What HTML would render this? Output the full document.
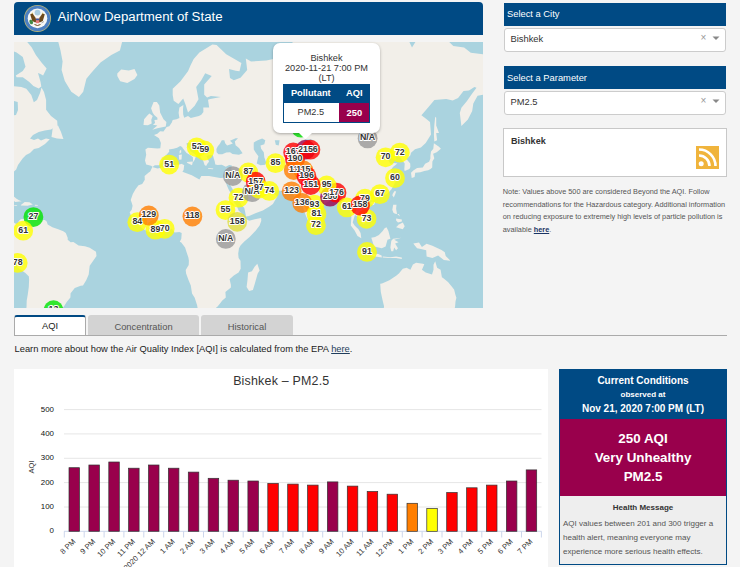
<!DOCTYPE html>
<html><head><meta charset="utf-8">
<style>
*{margin:0;padding:0;box-sizing:border-box}
html,body{width:740px;height:567px;overflow:hidden;background:#f4f4f4;font-family:"Liberation Sans",sans-serif;color:#333}
.a{position:absolute;white-space:nowrap}
.blue{background:#004a84}
.t{position:absolute;white-space:nowrap;line-height:1}
svg text{font-family:"Liberation Sans",sans-serif}
.ml{font-size:8.8px;font-weight:bold;fill:#333;text-anchor:middle;stroke:#fff;stroke-width:2px;paint-order:stroke;stroke-linejoin:round}
.yl{font-size:7.9px;fill:#111;text-anchor:end}
.xl{font-size:7.6px;fill:#333;text-anchor:end}
</style></head><body>
<!-- header -->
<div class="a blue" style="left:14px;top:2px;width:469px;height:32.5px;border-radius:4px 4px 0 0"></div>
<svg class="a" style="left:23px;top:4px" width="29" height="29" viewBox="0 0 29 29">
 <circle cx="14.5" cy="14.4" r="13.5" fill="#b4b27a"/>
 <circle cx="14.5" cy="14.4" r="12.7" fill="#4d80c2"/>
 <circle cx="14.5" cy="14.4" r="9.8" fill="#f7f7f5"/>
 <circle cx="14.5" cy="8.6" r="2.9" fill="#a8cde2"/>
 <path d="M7.2,10.2 L9.6,9.6 L12.2,13.2 L13.8,16.8 L12.4,18.6 L9.2,17 Z" fill="#6d4a1c"/>
 <path d="M21.8,10.2 L19.4,9.6 L16.8,13.2 L15.2,16.8 L16.6,18.6 L19.8,17 Z" fill="#6d4a1c"/>
 <path d="M8.3,9.6 L9.6,8.4 L10.2,10 Z M20.7,9.6 L19.4,8.4 L18.8,10 Z" fill="#c9b04a"/>
 <rect x="12.9" y="14.6" width="3.3" height="4.6" fill="#e57878"/>
 <rect x="12.9" y="14.6" width="3.3" height="1.6" fill="#3a5ca6"/>
 <ellipse cx="8.2" cy="18" rx="1.7" ry="2.4" fill="#3f8a44" transform="rotate(-25 8.2 18)"/>
 <path d="M18.5,19 L21,17.5" stroke="#999" stroke-width="0.8"/>
 <path d="M11.5,20.5 L14.5,21.5 L17.5,20.5" stroke="#6d4a1c" stroke-width="1" fill="none"/>
</svg>
<div class="t" style="left:57.6px;top:10px;font-size:13.25px;color:#fff">AirNow Department of State</div>

<!-- map -->
<svg class="a" style="left:0;top:0" width="740" height="567" viewBox="0 0 740 567">
<defs><clipPath id="mc"><rect x="14" y="42" width="469" height="266"/></clipPath></defs>
<g clip-path="url(#mc)">
<rect x="14" y="42" width="469" height="266" fill="#aad3df"/>
<polygon points="10.0,40.0 27.2,42.0 31.6,47.3 36.0,55.2 41.3,62.3 46.6,68.5 43.1,75.5 40.5,74.0 38.0,73.0 40.5,81.7 41.3,86.5 38.7,88.5 33.4,86.1 29.0,81.7 22.8,77.3 16.6,77.3 15.8,75.5 22.8,71.1 25.5,66.7 22.8,57.0 16.6,52.6 10.0,50.0" fill="#f2efe9"/>
<polygon points="10.0,86.0 21.4,86.9 26.3,88.7 31.3,94.9 33.8,102.3 37.0,100.0 40.0,93.0 41.5,87.5 44.0,92.0 46.1,100.0 46.1,109.7 51.0,116.0 57.2,120.8 57.5,125.5 51.0,129.4 44.7,130.5 38.7,132.0 33.0,135.0 30.0,138.5 34.0,140.0 38.0,138.5 41.0,140.5 46.0,138.5 49.8,139.3 45.0,144.0 38.7,148.0 34.0,149.0 30.0,153.0 26.0,155.0 22.6,158.6 18.0,165.0 16.2,169.5 14.0,171.6 10.0,172.0" fill="#f2efe9"/>
<polygon points="53.0,126.0 58.0,125.5 61.0,132.0 63.4,139.0 57.0,138.5 51.5,137.0" fill="#f2efe9"/>
<polygon points="10.4,195.5 14.2,196.8 16.2,198.6 19.0,200.3 21.7,201.3 15.2,201.9 10.4,198.6" fill="#f2efe9"/>
<polygon points="20.9,204.9 24.7,201.9 29.5,202.3 32.8,204.5 27.6,205.7 20.9,205.5" fill="#f2efe9"/>
<polygon points="13.5,204.9 17.5,205.3 16.2,206.1 13.5,205.3" fill="#f2efe9"/>
<polygon points="34.9,204.7 37.9,204.9 37.7,205.7 34.9,205.7" fill="#f2efe9"/>
<polygon points="-8.7,222.5 14.2,222.7 16.2,224.0 18.1,222.7 19.0,220.7 20.4,219.6 21.5,219.0 23.8,219.0 27.0,216.8 26.1,219.6 26.7,219.9 27.6,218.4 29.5,217.2 30.5,218.6 33.3,219.9 35.2,220.3 41.0,220.3 44.8,220.1 46.7,221.5 47.7,224.4 52.4,227.3 58.2,229.2 63.3,231.3 65.8,233.0 67.7,237.8 67.7,239.7 70.6,242.2 73.4,242.0 78.6,245.5 84.9,246.2 89.7,247.8 96.0,251.8 96.5,256.0 92.5,261.8 89.7,265.7 88.7,274.6 86.2,280.3 83.0,285.6 80.7,285.8 74.8,287.9 70.6,293.2 70.4,297.5 66.7,301.9 63.9,306.4 61.0,309.8 48.6,324.1 20.0,324.1 26.5,307.5 26.7,300.8 27.8,294.3 28.8,287.1 29.1,280.1 28.9,276.6 25.7,273.2 21.9,270.6 17.5,267.3 16.2,263.8 13.1,258.1 -8.7,250.2" fill="#f2efe9"/>
<polygon points="58.3,30.0 58.3,42.0 60.5,50.6 62.6,61.5 61.6,70.1 64.8,80.9 71.3,91.7 78.9,97.1 83.2,91.7 86.4,78.8 91.8,72.3 100.5,62.5 111.3,55.0 119.9,50.6 122.1,42.0 122.1,30.0" fill="#f2efe9"/>
<polygon points="117.3,73.6 121.2,69.4 128.8,70.4 134.5,68.9 137.4,75.0 134.5,79.0 127.3,82.9 120.2,81.2 117.3,75.9" fill="#f2efe9"/>
<polygon points="152.3,129.8 157.4,128.3 165.8,126.5 166.4,121.9 163.5,119.3 160.1,112.4 159.3,105.5 156.9,101.9 153.6,101.9 151.1,108.3 152.7,112.8 154.2,115.1 157.4,117.7 157.4,119.7 154.4,120.0 155.1,123.1 153.0,124.7 157.4,125.6" fill="#f2efe9"/>
<polygon points="151.7,123.4 151.3,119.7 152.7,116.1 149.4,113.4 146.9,116.1 144.1,119.3 143.5,125.0 147.9,125.3" fill="#f2efe9"/>
<polygon points="152.5,166.7 151.1,165.7 146.2,164.6 145.0,160.4 146.2,154.7 145.4,149.6 147.9,147.8 157.4,148.5 160.3,148.3 160.9,142.9 159.0,138.2 154.0,135.1 157.4,133.7 160.1,131.3 163.5,131.6 166.6,127.1 169.3,126.2 171.8,122.5 172.7,120.0 176.5,119.3 179.4,118.0 178.6,112.8 179.4,107.6 183.4,105.1 183.0,109.3 183.2,114.4 184.2,117.7 188.0,116.1 190.8,118.0 198.9,116.1 201.3,114.8 203.4,112.1 203.3,107.6 209.2,107.6 208.0,99.7 210.3,98.9 220.8,97.0 210.9,95.9 207.1,97.4 204.2,94.7 204.2,84.6 211.7,75.9 205.2,73.2 201.3,80.3 196.2,87.1 198.5,99.3 194.7,105.8 188.0,112.4 185.7,105.1 183.2,98.5 178.4,104.0 173.7,100.8 172.7,95.1 172.7,88.8 180.3,81.6 188.0,71.3 190.7,65.0 193.7,58.9 199.4,52.5 212.4,44.5 216.6,45.1 226.2,54.2 241.4,63.0 239.5,71.3 235.7,70.8 229.0,68.9 230.0,78.1 233.8,80.3 240.5,77.7 247.2,69.9 245.8,58.4 251.0,61.5 266.3,60.5 275.8,58.4 289.2,54.7 293.9,37.3 296.8,26.0 300.0,30.0 409.0,30.0 409.4,42.0 412.0,47.4 415.4,42.0 449.2,42.0 453.3,46.1 464.1,47.4 470.8,52.8 483.0,54.2 490.0,54.2 490.0,94.7 483.0,94.7 477.6,95.8 473.3,103.4 472.2,110.9 467.9,119.6 461.4,126.1 459.8,113.1 461.4,107.7 466.8,101.2 472.2,93.6 476.5,87.7 474.4,87.1 469.0,90.4 463.5,90.9 458.1,97.9 452.7,100.6 446.2,99.0 434.4,100.1 427.9,107.7 421.4,115.2 425.7,118.5 430.0,122.0 431.0,134.5 425.7,142.9 420.9,147.5 415.0,149.3 411.0,152.7 410.4,155.2 406.4,159.0 410.2,163.4 410.4,166.9 409.4,169.0 404.7,170.9 404.3,169.3 404.7,163.4 401.8,159.7 400.5,157.5 396.1,156.0 395.3,160.0 391.3,157.5 388.1,159.7 390.4,164.1 394.2,163.1 397.4,163.6 393.0,166.9 390.9,170.0 395.9,178.4 395.9,180.8 393.8,185.0 391.5,189.3 388.4,192.4 386.0,194.7 381.2,197.0 375.1,198.6 373.2,201.1 369.4,198.6 366.9,200.1 365.1,204.3 369.7,209.7 371.6,217.2 371.3,218.6 367.6,220.9 363.2,224.2 360.8,220.5 358.8,217.2 355.0,214.9 354.1,217.6 352.7,222.5 354.6,225.4 356.6,227.5 358.3,229.0 360.6,233.0 361.3,238.2 357.5,235.9 354.6,230.4 350.8,225.4 351.4,216.8 350.6,213.7 349.5,208.7 346.4,209.1 343.2,209.7 343.6,203.7 339.8,200.7 338.4,197.0 335.9,197.6 332.1,198.2 328.3,201.7 324.5,203.7 322.2,206.3 317.8,210.7 316.5,215.5 315.5,220.9 311.1,225.2 308.6,221.5 306.0,215.9 304.1,210.7 302.1,203.7 301.8,199.1 296.8,199.7 293.9,195.5 292.0,193.5 291.1,191.8 285.3,190.7 278.9,190.7 272.6,189.7 270.6,186.9 266.3,187.8 261.5,185.2 260.1,183.0 257.7,180.6 255.4,180.6 254.8,182.1 257.7,187.1 259.2,189.3 261.5,188.8 261.5,192.2 267.2,192.8 268.7,190.7 270.6,188.6 271.0,192.4 275.0,194.3 277.3,196.6 274.8,200.7 272.9,204.1 269.1,206.7 262.8,210.5 256.7,212.7 249.1,216.0 246.0,216.4 245.3,212.7 244.3,207.9 241.4,204.7 238.0,198.6 234.4,192.4 230.9,186.0 229.4,183.9 230.0,181.9 228.6,185.4 225.4,181.0 227.1,186.0 229.0,190.3 233.4,197.6 234.2,202.5 236.7,205.7 238.6,210.5 242.4,214.1 245.4,218.4 249.1,220.7 254.8,219.2 261.1,218.0 261.3,220.7 259.6,225.4 255.8,230.6 249.6,236.9 244.3,241.5 240.5,245.5 239.0,248.3 238.2,253.7 238.6,257.9 240.5,260.8 240.7,268.7 238.6,272.6 233.8,275.4 229.6,279.3 230.9,284.8 230.9,287.5 225.4,292.1 225.8,297.5 222.3,300.6 220.4,303.0 217.6,306.4 214.7,308.9 212.0,309.8 205.2,310.2 198.5,310.5 197.5,307.5 197.1,305.2 194.7,297.7 192.0,293.4 190.8,285.6 188.4,279.7 186.1,273.6 185.7,270.1 188.7,264.9 188.9,260.8 188.4,257.6 186.6,252.2 185.1,247.4 181.3,242.6 179.8,241.8 181.3,238.8 181.7,233.0 179.4,231.9 174.6,232.5 171.8,228.8 169.7,228.4 165.1,229.2 162.8,230.2 159.3,231.5 155.5,230.6 148.8,232.3 142.5,228.6 138.0,224.4 137.0,222.5 134.5,219.8 131.7,217.6 129.7,212.3 131.7,209.7 132.6,205.7 131.7,202.7 130.7,200.1 132.8,194.1 135.5,189.3 138.5,185.2 142.2,184.1 144.8,179.7 144.6,176.1 148.7,172.5 150.2,171.6 152.1,167.4" fill="#f2efe9"/>
<polygon points="10.0,100.0 17.7,102.0 18.0,110.0 16.0,115.0 10.0,116.0" fill="#aad3df"/>
<polygon points="152.5,166.9 154.8,165.3 159.3,165.3 161.3,163.1 162.6,158.5 167.4,153.7 169.3,151.4 168.9,149.6 173.5,148.8 177.1,147.8 180.2,145.9 182.1,147.0 182.8,148.3 186.6,152.9 190.5,155.2 192.9,157.2 193.1,162.2 194.7,159.7 196.0,156.0 198.5,157.0 195.4,154.5 190.3,150.9 188.9,148.0 187.2,147.0 186.6,143.2 189.3,142.7 190.8,143.7 194.5,148.3 197.7,150.6 200.2,153.5 200.4,157.2 203.3,160.9 204.6,165.0 206.1,166.0 207.5,163.4 208.4,162.4 209.0,161.4 206.7,156.7 206.9,155.7 209.0,155.2 212.8,155.0 213.4,157.0 213.8,158.5 214.7,161.2 215.3,164.6 217.6,165.0 221.8,164.8 225.8,166.7 229.2,165.0 231.9,165.5 231.5,168.1 230.9,171.8 230.0,174.3 228.6,177.5 224.8,177.7 220.2,177.9 209.0,176.1 201.3,175.9 199.4,179.5 191.8,175.2 188.4,174.1 182.4,171.8 183.6,170.0 184.2,165.0 182.6,164.6 182.1,163.8 178.1,164.8 168.9,165.0 162.0,167.6 157.6,168.6 153.0,167.2" fill="#aad3df"/>
<polygon points="218.5,154.2 216.6,152.2 216.4,149.1 217.8,146.2 219.9,143.7 221.8,140.2 224.3,140.2 225.2,143.2 227.1,145.6 230.9,144.3 232.8,143.5 230.0,140.7 235.7,138.2 238.0,138.2 234.8,141.6 235.7,145.4 235.3,145.1 239.0,148.0 242.6,153.2 239.0,154.7 232.5,154.0 230.0,152.2 226.2,152.4 222.3,154.2" fill="#aad3df"/>
<polygon points="253.8,142.4 257.7,140.2 262.2,138.5 265.3,140.2 264.3,144.3 260.5,145.6 261.1,148.8 263.8,152.2 264.3,157.2 266.1,162.2 265.3,164.8 260.5,165.3 256.7,163.4 258.4,156.2 255.8,152.7 253.8,149.6 253.7,145.6" fill="#aad3df"/>
<polygon points="274.8,140.2 279.6,140.2 278.7,145.6 275.8,144.8" fill="#aad3df"/>
<polygon points="304.4,139.6 311.1,139.3 314.0,140.7 306.3,142.1" fill="#aad3df"/>
<polygon points="361.3,125.3 366.5,122.5 372.2,112.1 370.3,114.4 364.6,123.1" fill="#aad3df"/>
<polygon points="186.8,161.9 192.9,161.4 192.0,165.3 187.4,163.1" fill="#f2efe9"/>
<polygon points="179.2,159.7 181.5,159.5 181.9,154.5 178.8,155.0" fill="#f2efe9"/>
<polygon points="179.6,153.7 181.3,152.2 181.1,149.6 179.6,151.1" fill="#f2efe9"/>
<polygon points="208.0,167.9 213.4,168.6 212.8,169.3 208.2,168.8" fill="#f2efe9"/>
<polygon points="224.8,169.7 229.2,167.6 226.2,168.6" fill="#f2efe9"/>
<polygon points="315.7,221.9 316.5,221.9 319.5,226.3 318.4,228.8 316.1,229.2 315.5,226.3" fill="#f2efe9"/>
<polygon points="257.3,263.8 259.6,270.6 257.7,273.6 254.8,283.8 252.9,290.0 249.1,291.1 246.6,286.9 247.5,279.7 248.1,272.6 251.9,271.2 254.6,266.7" fill="#f2efe9"/>
<polygon points="411.7,177.9 414.6,177.0 415.2,172.7 420.3,172.3 424.3,171.1 428.2,170.2 430.6,169.0 432.2,167.4 432.4,161.4 434.3,158.2 433.1,153.7 436.7,152.2 440.9,148.8 439.0,146.7 433.9,143.2 433.3,148.8 431.0,151.4 430.4,156.0 430.4,158.5 429.1,161.7 425.1,163.8 422.8,167.4 417.1,167.9 413.3,170.4 411.0,172.7" fill="#f2efe9"/>
<polygon points="434.3,141.6 437.1,140.2 436.2,133.1 439.0,133.1 436.2,125.6 436.2,117.7 435.2,116.7 434.3,125.6 433.9,134.5" fill="#f2efe9"/>
<polygon points="392.5,195.5 393.8,197.6 395.1,194.5 396.1,191.4 394.6,190.9 392.6,193.9" fill="#f2efe9"/>
<polygon points="370.5,203.3 372.2,205.3 374.1,204.7 375.1,202.3 373.7,201.5 371.3,201.9" fill="#f2efe9"/>
<polygon points="392.3,209.7 393.2,204.7 396.5,204.7 396.1,208.7 397.0,213.7 399.9,216.6 398.9,214.1 395.1,213.7 393.4,212.7" fill="#f2efe9"/>
<polygon points="396.1,227.3 402.8,229.2 404.7,226.3 402.8,222.5 398.9,224.4" fill="#f2efe9"/>
<polygon points="396.1,218.6 401.8,219.6 401.8,221.5 398.0,222.5 396.1,220.5" fill="#f2efe9"/>
<polygon points="371.3,237.8 374.1,246.4 381.8,248.3 385.6,246.4 387.5,239.7 390.4,238.8 388.4,231.1 386.5,227.3 384.6,228.3 382.7,231.1 378.9,235.0 375.1,236.9" fill="#f2efe9"/>
<polygon points="391.3,251.2 390.4,247.4 391.3,240.7 393.2,238.8 401.4,237.8 394.2,239.7 398.6,242.2 395.1,243.6 398.0,248.3 396.1,250.2 394.2,247.4 393.2,251.2" fill="#f2efe9"/>
<polygon points="364.6,253.7 369.4,255.6 375.1,256.4 381.8,257.4 381.6,255.4 378.3,253.9 374.1,253.7 370.3,253.1 365.5,252.0" fill="#f2efe9"/>
<polygon points="382.7,256.4 390.4,257.2 396.1,256.6 401.8,257.6 401.8,258.9 396.1,257.9 390.4,257.9 382.7,257.6" fill="#f2efe9"/>
<polygon points="413.3,243.4 419.0,242.4 421.9,247.0 426.6,243.7 432.4,245.7 441.5,249.9 444.8,252.2 445.7,256.0 450.5,260.8 443.8,259.9 438.1,255.6 432.4,257.9 426.6,256.4 426.2,250.2 420.9,248.9 417.1,248.3 415.2,246.0" fill="#f2efe9"/>
<polygon points="380.2,283.8 382.0,283.4 389.4,280.3 396.5,275.6 398.9,273.6 402.8,268.7 406.6,267.7 410.4,269.7 412.9,264.6 416.1,262.8 422.8,263.8 424.3,264.2 422.4,268.7 421.9,269.7 425.7,272.6 432.0,274.6 433.5,269.7 433.5,264.7 435.2,261.2 437.1,267.7 440.6,269.7 441.9,277.2 443.4,278.3 448.0,281.9 451.1,285.8 454.1,289.6 455.5,295.1 456.4,297.7 455.5,301.4 455.1,306.4 451.4,324.1 380.8,324.1 384.1,306.4 382.7,300.8 380.8,292.1" fill="#f2efe9"/>
<circle cx="33.4" cy="217.1" r="9.9" fill="#00e400" fill-opacity="0.8"/>
<circle cx="23.2" cy="230.7" r="9.9" fill="#ffff00" fill-opacity="0.8"/>
<circle cx="17.7" cy="262.9" r="9.9" fill="#ffff00" fill-opacity="0.8"/>
<circle cx="53.5" cy="310.2" r="9.9" fill="#00e400" fill-opacity="0.8"/>
<circle cx="169.2" cy="164.6" r="9.9" fill="#ffff00" fill-opacity="0.8"/>
<circle cx="196.7" cy="147.3" r="9.9" fill="#ffff00" fill-opacity="0.8"/>
<circle cx="204.3" cy="150.5" r="9.9" fill="#ffff00" fill-opacity="0.8"/>
<circle cx="137.3" cy="222.2" r="9.9" fill="#ffff00" fill-opacity="0.8"/>
<circle cx="155.4" cy="229.7" r="9.9" fill="#ffff00" fill-opacity="0.8"/>
<circle cx="164.7" cy="228.8" r="9.9" fill="#ffff00" fill-opacity="0.8"/>
<circle cx="148.8" cy="215.5" r="9.9" fill="#ff7e00" fill-opacity="0.8"/>
<circle cx="192.4" cy="216.5" r="9.9" fill="#ff7e00" fill-opacity="0.8"/>
<circle cx="225.8" cy="238.9" r="9.9" fill="#999999" fill-opacity="0.8"/>
<circle cx="232.9" cy="176.1" r="9.9" fill="#999999" fill-opacity="0.8"/>
<circle cx="248.3" cy="172.4" r="9.9" fill="#ffff00" fill-opacity="0.8"/>
<circle cx="238.5" cy="197.7" r="9.9" fill="#ffff00" fill-opacity="0.8"/>
<circle cx="252" cy="192.2" r="9.9" fill="#999999" fill-opacity="0.8"/>
<circle cx="255.7" cy="181.7" r="9.9" fill="#ff0000" fill-opacity="0.8"/>
<circle cx="258.8" cy="188.5" r="9.9" fill="#ffff00" fill-opacity="0.8"/>
<circle cx="269.3" cy="190.9" r="9.9" fill="#ffff00" fill-opacity="0.8"/>
<circle cx="225.5" cy="210.1" r="9.9" fill="#ffff00" fill-opacity="0.8"/>
<circle cx="237.2" cy="221.8" r="9.9" fill="#dede3a" fill-opacity="0.8"/>
<circle cx="275.5" cy="163.2" r="9.9" fill="#ffff00" fill-opacity="0.8"/>
<circle cx="301" cy="127.7" r="9.9" fill="#00e400" fill-opacity="0.8"/>
<circle cx="305.5" cy="149.7" r="9.9" fill="#99004c" fill-opacity="0.8"/>
<circle cx="293.2" cy="152.5" r="9.9" fill="#ff0000" fill-opacity="0.8"/>
<circle cx="295" cy="159.5" r="9.9" fill="#ff0000" fill-opacity="0.8"/>
<circle cx="310.4" cy="149.7" r="9.9" fill="#ff0000" fill-opacity="0.8"/>
<circle cx="291.6" cy="191.3" r="9.9" fill="#ff7e00" fill-opacity="0.8"/>
<circle cx="314.4" cy="204.6" r="9.9" fill="#ffff00" fill-opacity="0.8"/>
<circle cx="302.2" cy="203.0" r="9.9" fill="#ff7e00" fill-opacity="0.8"/>
<circle cx="316.5" cy="214.1" r="9.9" fill="#ffff00" fill-opacity="0.8"/>
<circle cx="316" cy="225.2" r="9.9" fill="#ffff00" fill-opacity="0.8"/>
<circle cx="293.7" cy="170.1" r="9.9" fill="#ff7e00" fill-opacity="0.8"/>
<circle cx="303.4" cy="170.5" r="9.9" fill="#ff7e00" fill-opacity="0.8"/>
<circle cx="306.5" cy="176.3" r="9.9" fill="#ff0000" fill-opacity="0.8"/>
<circle cx="330" cy="196.7" r="9.9" fill="#99004c" fill-opacity="0.8"/>
<circle cx="336.5" cy="192.7" r="9.9" fill="#ff0000" fill-opacity="0.8"/>
<circle cx="326.6" cy="185.5" r="9.9" fill="#ffff00" fill-opacity="0.8"/>
<circle cx="310.7" cy="185.0" r="9.9" fill="#ff0000" fill-opacity="0.8"/>
<circle cx="346.8" cy="207.4" r="9.9" fill="#ffff00" fill-opacity="0.8"/>
<circle cx="365" cy="198.7" r="9.9" fill="#ffff00" fill-opacity="0.8"/>
<circle cx="379.9" cy="194.2" r="9.9" fill="#ffff00" fill-opacity="0.8"/>
<circle cx="366.6" cy="218.8" r="9.9" fill="#ffff00" fill-opacity="0.8"/>
<circle cx="360" cy="205.5" r="9.9" fill="#ff0000" fill-opacity="0.8"/>
<circle cx="367" cy="251.9" r="9.9" fill="#ffff00" fill-opacity="0.8"/>
<circle cx="395" cy="178.1" r="9.9" fill="#ffff00" fill-opacity="0.8"/>
<circle cx="385.6" cy="157.3" r="9.9" fill="#ffff00" fill-opacity="0.8"/>
<circle cx="399.8" cy="152.6" r="9.9" fill="#ffff00" fill-opacity="0.8"/>
<circle cx="367.6" cy="138.4" r="9.9" fill="#999999" fill-opacity="0.8"/>
<text x="367.6" y="140.3" class="ml">N/A</text>
<text x="196.7" y="149.2" class="ml">52</text>
<text x="204.3" y="152.4" class="ml">59</text>
<text x="293.2" y="154.4" class="ml">167</text>
<text x="399.8" y="154.5" class="ml">72</text>
<text x="305.5" y="151.6" class="ml">250</text>
<text x="310.4" y="151.6" class="ml">156</text>
<text x="385.6" y="159.2" class="ml">70</text>
<text x="295" y="161.4" class="ml">190</text>
<text x="275.5" y="165.1" class="ml">85</text>
<text x="169.2" y="166.5" class="ml">51</text>
<text x="293.7" y="172.0" class="ml">11</text>
<text x="303.4" y="172.4" class="ml">115</text>
<text x="248.3" y="174.3" class="ml">87</text>
<text x="232.9" y="178.0" class="ml">N/A</text>
<text x="306.5" y="178.2" class="ml">196</text>
<text x="395" y="180.0" class="ml">60</text>
<text x="255.7" y="183.6" class="ml">157</text>
<text x="310.7" y="186.9" class="ml">151</text>
<text x="326.6" y="187.4" class="ml">95</text>
<text x="269.3" y="192.8" class="ml">74</text>
<text x="291.6" y="193.2" class="ml">123</text>
<text x="252" y="194.1" class="ml">N/A</text>
<text x="258.8" y="190.4" class="ml">97</text>
<text x="379.9" y="196.1" class="ml">67</text>
<text x="330" y="198.6" class="ml">250</text>
<text x="238.5" y="199.6" class="ml">72</text>
<text x="365" y="200.6" class="ml">79</text>
<text x="336.5" y="194.6" class="ml">176</text>
<text x="302.2" y="204.9" class="ml">136</text>
<text x="314.4" y="206.5" class="ml">93</text>
<text x="360" y="207.4" class="ml">158</text>
<text x="346.8" y="209.3" class="ml">61</text>
<text x="225.5" y="212.0" class="ml">55</text>
<text x="316.5" y="216.0" class="ml">81</text>
<text x="148.8" y="217.4" class="ml">129</text>
<text x="192.4" y="218.4" class="ml">118</text>
<text x="33.4" y="219.0" class="ml">27</text>
<text x="366.6" y="220.7" class="ml">73</text>
<text x="237.2" y="223.7" class="ml">158</text>
<text x="137.3" y="224.1" class="ml">84</text>
<text x="316" y="227.1" class="ml">72</text>
<text x="164.7" y="230.7" class="ml">70</text>
<text x="155.4" y="231.6" class="ml">89</text>
<text x="23.2" y="232.6" class="ml">61</text>
<text x="225.8" y="240.8" class="ml">N/A</text>
<text x="367" y="253.8" class="ml">91</text>
<text x="17.7" y="264.8" class="ml">78</text>
<text x="53.5" y="312.1" class="ml">13</text>
</g>
</svg>

<!-- popup -->
<div class="a" style="left:272.8px;top:43.3px;width:107.4px;height:89.9px;background:#fff;border-radius:7px;box-shadow:0 1px 3px rgba(0,0,0,0.3)"></div>
<svg class="a" style="left:298px;top:132px" width="16" height="9"><path d="M1,1 L7.3,7.3 L14,1 Z" fill="#fff"/></svg>
<div class="t" style="left:272.8px;width:107.4px;text-align:center;top:54.4px;font-size:9.2px;color:#333;line-height:9.7px;white-space:normal">Bishkek<br>2020-11-21 7:00 PM<br>(LT)</div>
<div class="a" style="left:283.1px;top:84px;width:87.1px;height:38.7px;border:1px solid #004a84;background:#fff"></div>
<div class="a blue" style="left:283.1px;top:84px;width:87.1px;height:18.6px"></div>
<div class="a" style="left:338.5px;top:102.6px;width:31.7px;height:20.1px;background:#99004c;border-right:1px solid #004a84;border-bottom:1px solid #004a84"></div>
<div class="t" style="left:283.1px;width:55.4px;text-align:center;top:89.3px;font-size:9.3px;font-weight:bold;color:#fff">Pollutant</div>
<div class="t" style="left:338.5px;width:31.7px;text-align:center;top:89.3px;font-size:9.3px;font-weight:bold;color:#fff">AQI</div>
<div class="t" style="left:283.1px;width:55.4px;text-align:center;top:108.3px;font-size:9.2px;color:#333">PM2.5</div>
<div class="t" style="left:338.5px;width:31.7px;text-align:center;top:107.6px;font-size:9.4px;font-weight:bold;color:#fff">250</div>

<!-- right panel -->
<div class="a blue" style="left:503.5px;top:3px;width:222.7px;height:23px"></div>
<div class="t" style="left:507px;top:10.4px;font-size:9.35px;color:#fff">Select a City</div>
<div class="a" style="left:503.8px;top:27.8px;width:222.4px;height:23.8px;background:#fff;border:1px solid #ccc;border-radius:3px"></div>
<div class="t" style="left:510.5px;top:34.8px;font-size:9.35px;color:#333">Bishkek</div>
<div class="t" style="left:700.5px;top:33px;font-size:10px;color:#999">&#215;</div>
<svg class="a" style="left:712px;top:36px" width="8" height="5"><path d="M0.5,0.5 L7.5,0.5 L4,4 Z" fill="#888"/></svg>

<div class="a blue" style="left:503.5px;top:66px;width:222.7px;height:23px"></div>
<div class="t" style="left:507px;top:74.2px;font-size:9.35px;color:#fff">Select a Parameter</div>
<div class="a" style="left:503.8px;top:90.8px;width:222.4px;height:23.8px;background:#fff;border:1px solid #ccc;border-radius:3px"></div>
<div class="t" style="left:510.5px;top:98.2px;font-size:9.35px;color:#333">PM2.5</div>
<div class="t" style="left:700.5px;top:96px;font-size:10px;color:#999">&#215;</div>
<svg class="a" style="left:712px;top:99px" width="8" height="5"><path d="M0.5,0.5 L7.5,0.5 L4,4 Z" fill="#888"/></svg>

<div class="a" style="left:503px;top:128px;width:223.5px;height:48.5px;background:#fff;border:1px solid #c8c8c8"></div>
<div class="t" style="left:511px;top:137px;font-size:9.05px;font-weight:bold;color:#333">Bishkek</div>
<svg class="a" style="left:696px;top:146px" width="23" height="23" viewBox="0 0 23 23">
 <rect width="23" height="23" fill="#f0b43c"/>
 <circle cx="5.2" cy="17.7" r="2.5" fill="#fff"/>
 <path d="M3,9.5 A10.5,10.5 0 0 1 13.5,20" stroke="#fff" stroke-width="2.6" fill="none"/>
 <path d="M3,3.5 A16.5,16.5 0 0 1 19.5,20" stroke="#fff" stroke-width="2.6" fill="none"/>
</svg>
<div class="t" style="left:502.8px;top:185.8px;font-size:7.33px;color:#555;line-height:12.8px">Note: Values above 500 are considered Beyond the AQI. Follow<br>recommendations for the Hazardous category. Additional information<br>on reducing exposure to extremely high levels of particle pollution is<br>available <span style="color:#1a3565;text-decoration:underline;font-weight:bold">here</span>.</div>

<!-- tabs -->
<div class="a" style="left:14px;top:315px;width:72px;height:21px;background:#fff;border:1px solid #aaa;border-top:2px solid #004a84;border-bottom:none;border-radius:3px 3px 0 0"></div>
<div class="a" style="left:88px;top:315px;width:111px;height:20.5px;background:#d3d3d3;border-radius:3px 3px 0 0"></div>
<div class="a" style="left:201px;top:315px;width:92px;height:20.5px;background:#d3d3d3;border-radius:3px 3px 0 0"></div>
<div class="a" style="left:14px;top:335px;width:713px;height:1px;background:#aaa"></div>
<div class="t" style="left:14px;width:72px;text-align:center;top:322.4px;font-size:9.35px;color:#222">AQI</div>
<div class="t" style="left:88px;width:111px;text-align:center;top:322.6px;font-size:9.35px;color:#555">Concentration</div>
<div class="t" style="left:201px;width:92px;text-align:center;top:322.6px;font-size:9.35px;color:#555">Historical</div>
<div class="t" style="left:14.5px;top:345px;font-size:9.33px;color:#222">Learn more about how the Air Quality Index [AQI] is calculated from the EPA <span style="color:#1f3d5c;text-decoration:underline">here</span>.</div>

<!-- chart -->
<div class="a" style="left:14px;top:369px;width:534px;height:198px;background:#fff"></div>
<svg class="a" style="left:0;top:0" width="740" height="567" viewBox="0 0 740 567">
<text x="281.3" y="385.1" style="font-size:12.45px;fill:#333;text-anchor:middle;letter-spacing:0.2px">Bishkek – PM2.5</text>
<text transform="translate(33.5,467) rotate(-90)" style="font-size:7.6px;fill:#333;text-anchor:middle">AQI</text>
<line x1="64" x2="541.5" y1="507.0" y2="507.0" stroke="#e6e6e6" stroke-width="1"/>
<line x1="64" x2="541.5" y1="482.6" y2="482.6" stroke="#e6e6e6" stroke-width="1"/>
<line x1="64" x2="541.5" y1="458.3" y2="458.3" stroke="#e6e6e6" stroke-width="1"/>
<line x1="64" x2="541.5" y1="433.9" y2="433.9" stroke="#e6e6e6" stroke-width="1"/>
<line x1="64" x2="541.5" y1="409.6" y2="409.6" stroke="#e6e6e6" stroke-width="1"/>
<text x="54" y="533.3" class="yl">0</text>
<text x="54" y="509.0" class="yl">100</text>
<text x="54" y="484.6" class="yl">200</text>
<text x="54" y="460.3" class="yl">300</text>
<text x="54" y="435.9" class="yl">400</text>
<text x="54" y="411.6" class="yl">500</text>
<line x1="64" x2="541.5" y1="531.3" y2="531.3" stroke="#ccd6eb" stroke-width="1"/>
<line x1="64.3" x2="64.3" y1="531.3" y2="537.5" stroke="#ccd6eb" stroke-width="1"/>
<line x1="84.2" x2="84.2" y1="531.3" y2="537.5" stroke="#ccd6eb" stroke-width="1"/>
<line x1="104.1" x2="104.1" y1="531.3" y2="537.5" stroke="#ccd6eb" stroke-width="1"/>
<line x1="123.9" x2="123.9" y1="531.3" y2="537.5" stroke="#ccd6eb" stroke-width="1"/>
<line x1="143.8" x2="143.8" y1="531.3" y2="537.5" stroke="#ccd6eb" stroke-width="1"/>
<line x1="163.7" x2="163.7" y1="531.3" y2="537.5" stroke="#ccd6eb" stroke-width="1"/>
<line x1="183.6" x2="183.6" y1="531.3" y2="537.5" stroke="#ccd6eb" stroke-width="1"/>
<line x1="203.5" x2="203.5" y1="531.3" y2="537.5" stroke="#ccd6eb" stroke-width="1"/>
<line x1="223.3" x2="223.3" y1="531.3" y2="537.5" stroke="#ccd6eb" stroke-width="1"/>
<line x1="243.2" x2="243.2" y1="531.3" y2="537.5" stroke="#ccd6eb" stroke-width="1"/>
<line x1="263.1" x2="263.1" y1="531.3" y2="537.5" stroke="#ccd6eb" stroke-width="1"/>
<line x1="283.0" x2="283.0" y1="531.3" y2="537.5" stroke="#ccd6eb" stroke-width="1"/>
<line x1="302.9" x2="302.9" y1="531.3" y2="537.5" stroke="#ccd6eb" stroke-width="1"/>
<line x1="322.7" x2="322.7" y1="531.3" y2="537.5" stroke="#ccd6eb" stroke-width="1"/>
<line x1="342.6" x2="342.6" y1="531.3" y2="537.5" stroke="#ccd6eb" stroke-width="1"/>
<line x1="362.5" x2="362.5" y1="531.3" y2="537.5" stroke="#ccd6eb" stroke-width="1"/>
<line x1="382.4" x2="382.4" y1="531.3" y2="537.5" stroke="#ccd6eb" stroke-width="1"/>
<line x1="402.3" x2="402.3" y1="531.3" y2="537.5" stroke="#ccd6eb" stroke-width="1"/>
<line x1="422.1" x2="422.1" y1="531.3" y2="537.5" stroke="#ccd6eb" stroke-width="1"/>
<line x1="442.0" x2="442.0" y1="531.3" y2="537.5" stroke="#ccd6eb" stroke-width="1"/>
<line x1="461.9" x2="461.9" y1="531.3" y2="537.5" stroke="#ccd6eb" stroke-width="1"/>
<line x1="481.8" x2="481.8" y1="531.3" y2="537.5" stroke="#ccd6eb" stroke-width="1"/>
<line x1="501.7" x2="501.7" y1="531.3" y2="537.5" stroke="#ccd6eb" stroke-width="1"/>
<line x1="521.5" x2="521.5" y1="531.3" y2="537.5" stroke="#ccd6eb" stroke-width="1"/>
<line x1="541.4" x2="541.4" y1="531.3" y2="537.5" stroke="#ccd6eb" stroke-width="1"/>
<rect x="69.0" y="467.7" width="10.5" height="63.6" fill="#99004c" stroke="#333" stroke-width="0.7"/>
<rect x="88.9" y="465.0" width="10.5" height="66.3" fill="#99004c" stroke="#333" stroke-width="0.7"/>
<rect x="108.8" y="462.0" width="10.5" height="69.3" fill="#99004c" stroke="#333" stroke-width="0.7"/>
<rect x="128.6" y="468.2" width="10.5" height="63.1" fill="#99004c" stroke="#333" stroke-width="0.7"/>
<rect x="148.5" y="465.0" width="10.5" height="66.3" fill="#99004c" stroke="#333" stroke-width="0.7"/>
<rect x="168.4" y="468.2" width="10.5" height="63.1" fill="#99004c" stroke="#333" stroke-width="0.7"/>
<rect x="188.3" y="472.1" width="10.5" height="59.2" fill="#99004c" stroke="#333" stroke-width="0.7"/>
<rect x="208.2" y="478.3" width="10.5" height="53.0" fill="#99004c" stroke="#333" stroke-width="0.7"/>
<rect x="228.0" y="480.2" width="10.5" height="51.1" fill="#99004c" stroke="#333" stroke-width="0.7"/>
<rect x="247.9" y="481.0" width="10.5" height="50.3" fill="#99004c" stroke="#333" stroke-width="0.7"/>
<rect x="267.8" y="483.4" width="10.5" height="47.9" fill="#ff0000" stroke="#333" stroke-width="0.7"/>
<rect x="287.7" y="484.1" width="10.5" height="47.2" fill="#ff0000" stroke="#333" stroke-width="0.7"/>
<rect x="307.6" y="485.1" width="10.5" height="46.2" fill="#ff0000" stroke="#333" stroke-width="0.7"/>
<rect x="327.4" y="481.9" width="10.5" height="49.4" fill="#99004c" stroke="#333" stroke-width="0.7"/>
<rect x="347.3" y="486.1" width="10.5" height="45.2" fill="#ff0000" stroke="#333" stroke-width="0.7"/>
<rect x="367.2" y="491.5" width="10.5" height="39.8" fill="#ff0000" stroke="#333" stroke-width="0.7"/>
<rect x="387.1" y="494.2" width="10.5" height="37.1" fill="#ff0000" stroke="#333" stroke-width="0.7"/>
<rect x="407.0" y="503.3" width="10.5" height="28.0" fill="#ff7e00" stroke="#333" stroke-width="0.7"/>
<rect x="426.8" y="508.5" width="10.5" height="22.8" fill="#ffff00" stroke="#333" stroke-width="0.7"/>
<rect x="446.7" y="492.5" width="10.5" height="38.8" fill="#ff0000" stroke="#333" stroke-width="0.7"/>
<rect x="466.6" y="487.8" width="10.5" height="43.5" fill="#ff0000" stroke="#333" stroke-width="0.7"/>
<rect x="486.5" y="485.1" width="10.5" height="46.2" fill="#ff0000" stroke="#333" stroke-width="0.7"/>
<rect x="506.4" y="481.0" width="10.5" height="50.3" fill="#99004c" stroke="#333" stroke-width="0.7"/>
<rect x="526.2" y="469.9" width="10.5" height="61.4" fill="#99004c" stroke="#333" stroke-width="0.7"/>
<text transform="translate(75.9,542) rotate(-45)" class="xl">8 PM</text>
<text transform="translate(95.8,542) rotate(-45)" class="xl">9 PM</text>
<text transform="translate(115.7,542) rotate(-45)" class="xl">10 PM</text>
<text transform="translate(135.5,542) rotate(-45)" class="xl">11 PM</text>
<text transform="translate(155.4,542) rotate(-45)" class="xl">11/21/2020 12 AM</text>
<text transform="translate(175.3,542) rotate(-45)" class="xl">1 AM</text>
<text transform="translate(195.2,542) rotate(-45)" class="xl">2 AM</text>
<text transform="translate(215.1,542) rotate(-45)" class="xl">3 AM</text>
<text transform="translate(234.9,542) rotate(-45)" class="xl">4 AM</text>
<text transform="translate(254.8,542) rotate(-45)" class="xl">5 AM</text>
<text transform="translate(274.7,542) rotate(-45)" class="xl">6 AM</text>
<text transform="translate(294.6,542) rotate(-45)" class="xl">7 AM</text>
<text transform="translate(314.5,542) rotate(-45)" class="xl">8 AM</text>
<text transform="translate(334.3,542) rotate(-45)" class="xl">9 AM</text>
<text transform="translate(354.2,542) rotate(-45)" class="xl">10 AM</text>
<text transform="translate(374.1,542) rotate(-45)" class="xl">11 AM</text>
<text transform="translate(394.0,542) rotate(-45)" class="xl">12 PM</text>
<text transform="translate(413.9,542) rotate(-45)" class="xl">1 PM</text>
<text transform="translate(433.7,542) rotate(-45)" class="xl">2 PM</text>
<text transform="translate(453.6,542) rotate(-45)" class="xl">3 PM</text>
<text transform="translate(473.5,542) rotate(-45)" class="xl">4 PM</text>
<text transform="translate(493.4,542) rotate(-45)" class="xl">5 PM</text>
<text transform="translate(513.3,542) rotate(-45)" class="xl">6 PM</text>
<text transform="translate(533.1,542) rotate(-45)" class="xl">7 PM</text>
</svg>

<!-- current conditions -->
<div class="a" style="left:559px;top:369px;width:168px;height:196px;background:#eee;border:1px solid #004a84"></div>
<div class="a blue" style="left:559px;top:369px;width:168px;height:50px"></div>
<div class="a" style="left:560px;top:419px;width:166px;height:76.5px;background:#99004c"></div>
<div class="t" style="left:559px;width:168px;text-align:center;top:375.5px;font-size:10.02px;font-weight:bold;color:#fff">Current Conditions</div>
<div class="t" style="left:559px;width:168px;text-align:center;top:391px;font-size:8.02px;font-weight:bold;color:#fff">observed at</div>
<div class="t" style="left:559px;width:168px;text-align:center;top:403.8px;font-size:10px;font-weight:bold;color:#fff">Nov 21, 2020 7:00 PM (LT)</div>
<div class="t" style="left:559px;width:168px;text-align:center;top:429px;font-size:13.4px;font-weight:bold;color:#fff;line-height:19px;white-space:normal">250 AQI<br>Very Unhealthy<br>PM2.5</div>
<div class="t" style="left:559px;width:168px;text-align:center;top:504px;font-size:8px;font-weight:bold;color:#333">Health Message</div>
<div class="t" style="left:563px;top:516.8px;font-size:8.02px;color:#555;line-height:14px">AQI values between 201 and 300 trigger a<br>health alert, meaning everyone may<br>experience more serious health effects.</div>
</body></html>
